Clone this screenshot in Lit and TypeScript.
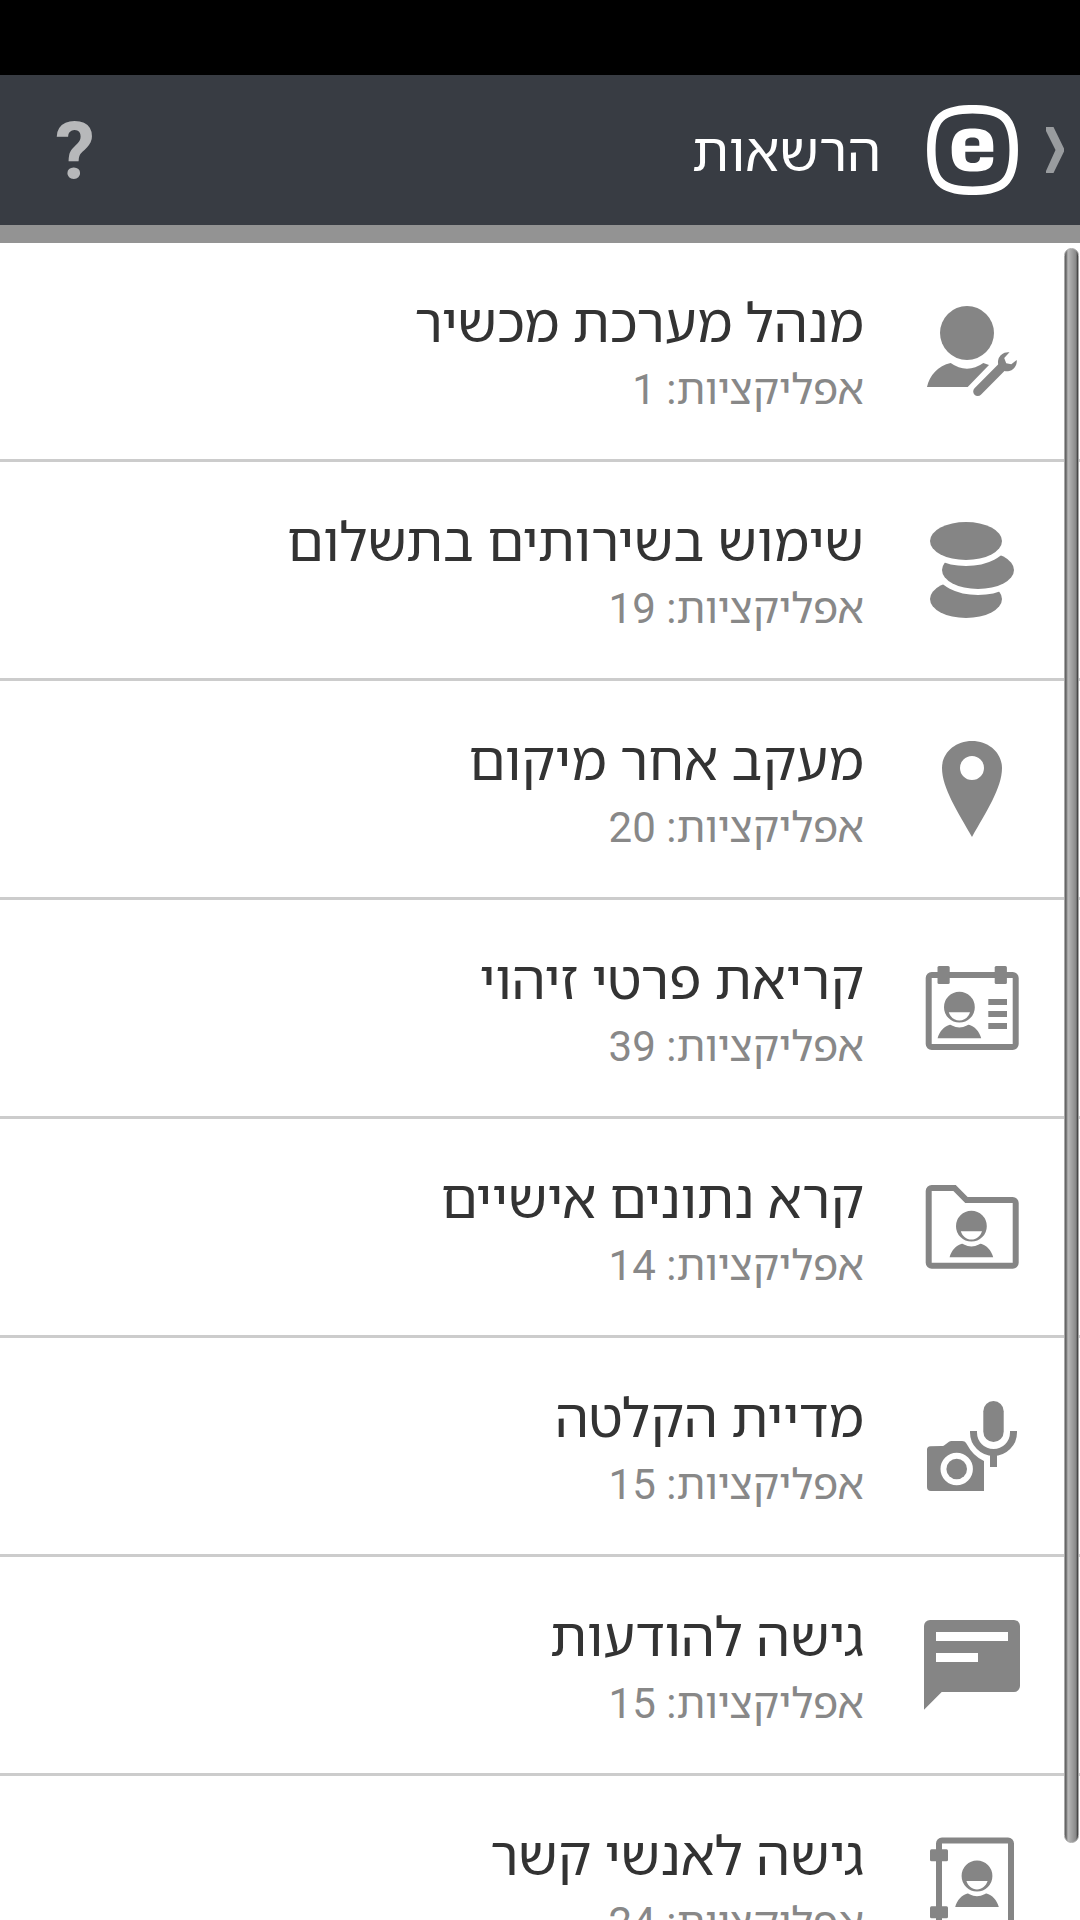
import { LitElement, html, css, svg, type SVGTemplateResult } from "lit";
import { customElement, property } from "lit/decorators.js";

interface Permission {
  title: string;
  count: number;
  icon: SVGTemplateResult;
}

/** Head-and-shoulders figure, drawn around the centre of the head. */
const person = (x: number, y: number) => svg`
  <g transform="translate(${x} ${y})">
    <path fill-rule="evenodd" d="M0-15.4a15.4 15.4 0 1 1 0 30.8a15.4 15.4 0 1 1 0-30.8zM-10.6 5c1.6 5 5.6 8.4 10.6 8.4s9-3.4 10.6-8.4z"/>
    <path d="M-21.8 31C-20 24.500-15 18.700-9.500 17.600Q-8.500 17.500-7.500 18.200Q0 22.400 7.500 18.200Q8.500 17.500 9.500 17.600C15 18.700 20 24.500 21.800 31z"/>
  </g>`;

const adminIcon = svg`
  <circle cx="43" cy="30" r="27"/>
  <path d="M3 84C5.500 72.500 14 62.500 26.700 60Q34.500 65.700 43 65.700T59.300 60L65 62L43.700 84z"/>
  <path d="M53.700 88.500L78.500 63.500" fill="none" stroke="#858585" stroke-width="9" stroke-linecap="round"/>
  <path d="M85.500 49.300A10 10 0 0 0 74.400 62L80.500 68A10 10 0 0 0 92.700 57L87.300 61.200L82.200 60.200L80.200 55z"/>`;

const coinsIcon = svg`
  <ellipse cx="42" cy="77" rx="36" ry="19"/>
  <ellipse class="lifted" cx="54" cy="48" rx="36" ry="19"/>
  <ellipse class="lifted" cx="42" cy="19" rx="36" ry="19"/>`;

const pinIcon = svg`
  <path fill-rule="evenodd" d="M48 0C65 0 78 12 78 27C78 47 62 71 48 96C34 71 18 47 18 27C18 12 31 0 48 0zM48 15a12 12 0 1 0 0 24a12 12 0 1 0 0-24z"/>`;

const badgeIcon = svg`
  <rect class="line" x="4.700" y="15" width="87" height="72" rx="3"/>
  <rect x="13.500" y="6" width="12.200" height="18" rx="1.500"/>
  <rect x="70.700" y="6" width="12.200" height="18" rx="1.500"/>
  <path d="M64.300 39H83v6H64.300zM64.300 51H83v6H64.300zM64.300 63H83v6H64.300z"/>
  ${person(35.4, 47.2)}`;

const folderIcon = svg`
  <path class="line" d="M7.700 9H30.500L42.500 21H88.700a3 3 0 0 1 3 3V83.700a3 3 0 0 1-3 3H7.700a3 3 0 0 1-3-3V12a3 3 0 0 1 3-3z"/>
  ${person(47.4, 47.2)}`;

const mediaIcon = svg`
  <rect x="59.300" y="3" width="20.400" height="41" rx="10.200"/>
  <path d="M49.500 33v1.500a20 20 0 0 0 40 0V33" fill="none" stroke="#858585" stroke-width="7"/>
  <path d="M66 56h7v13h-7z"/>
  <path fill-rule="evenodd" d="M6.500 48.300L18 48Q19.200 48 20 47.400L25 43.700Q26 43 27.500 43H38Q39.500 43 40.500 43.600Q42 44.500 43 46.500Q49 58 60 63V93H7Q3 93 3 89V51.500Q3 48.500 6.500 48.300zM32.700 54.800a16.200 16.200 0 1 0 0 32.400a16.200 16.200 0 1 0 0-32.400z"/>
  <circle cx="32.700" cy="71" r="10.300"/>`;

const messageIcon = svg`
  <path fill-rule="evenodd" d="M6 3H90a6 6 0 0 1 6 6V69a6 6 0 0 1-6 6H17.700L0 92.700V9a6 6 0 0 1 6-6zM12 15v9H84v-9zM12 36v9H54v-9z"/>`;

const contactsIcon = svg`
  <rect class="line" x="15" y="4.400" width="72" height="87" rx="3"/>
  <rect x="6" y="13.300" width="18" height="12" rx="1.500"/>
  <rect x="6" y="70.300" width="18" height="12" rx="1.500"/>
  ${person(53, 40)}`;

const permissions: Permission[] = [
  { title: "מנהל מערכת מכשיר", count: 1, icon: adminIcon },
  { title: "שימוש בשירותים בתשלום", count: 19, icon: coinsIcon },
  { title: "מעקב אחר מיקום", count: 20, icon: pinIcon },
  { title: "קריאת פרטי זיהוי", count: 39, icon: badgeIcon },
  { title: "קרא נתונים אישיים", count: 14, icon: folderIcon },
  { title: "מדיית הקלטה", count: 15, icon: mediaIcon },
  { title: "גישה להודעות", count: 15, icon: messageIcon },
  { title: "גישה לאנשי קשר", count: 24, icon: contactsIcon },
];

@customElement("permission-row")
export class PermissionRow extends LitElement {
  @property({ attribute: false }) item!: Permission;

  static styles = css`
    :host {
      display: block;
    }
    .row {
      display: flex;
      align-items: center;
      gap: 60px;
      height: 216px;
      padding: 0 60px;
      border-bottom: 3px solid #cccccc;
      color: inherit;
      text-decoration: none;
    }
    .icon {
      flex: none;
      width: 96px;
      height: 96px;
      fill: #858585;
    }
    .line {
      fill: none;
      stroke: #858585;
      stroke-width: 6;
    }
    .lifted {
      stroke: #ffffff;
      stroke-width: 12;
      paint-order: stroke;
    }
    .text {
      display: flex;
      flex-direction: column;
      gap: 2px;
      min-width: 0;
      padding-top: 4px;
    }
    .title {
      color: #333333;
      font-size: 54px;
      line-height: 72px;
    }
    .count {
      color: #888888;
      font-size: 42px;
      line-height: 56px;
    }
  `;

  render() {
    return html`
      <a class="row" href="#">
        <svg class="icon" viewBox="0 0 96 96" aria-hidden="true">${this.item.icon}</svg>
        <span class="text">
          <span class="title">${this.item.title}</span>
          <span class="count">אפליקציות: ${this.item.count}</span>
        </span>
      </a>
    `;
  }
}

@customElement("app-root")
export class AppRoot extends LitElement {
  static styles = css`
    :host {
      display: flex;
      flex-direction: column;
      height: 100vh;
      overflow: hidden;
      background: #ffffff;
      font-family: Roboto, "Noto Sans Hebrew", "Open Sans", sans-serif;
    }
    .status {
      flex: none;
      height: 75px;
      background: #000000;
    }
    .bar {
      flex: none;
      display: flex;
      align-items: center;
      justify-content: space-between;
      height: 150px;
      padding: 0 16px 0 45px;
      background: #383c43;
      border-bottom: 18px solid #939393;
    }
    .up {
      display: flex;
      align-items: center;
      gap: 28px;
      padding: 0;
      border: 0;
      background: none;
    }
    .chevron {
      width: 18px;
      height: 46px;
      fill: #999c9f;
    }
    .logo {
      width: 91px;
      height: 90px;
      fill: #ffffff;
    }
    .heading {
      display: flex;
      align-items: center;
      gap: 46px;
    }
    .name {
      margin: 0;
      padding-top: 6px;
      color: #ffffff;
      font-size: 54px;
      line-height: 72px;
      font-weight: 400;
    }
    .help {
      width: 60px;
      padding: 4px 0 0;
      border: 0;
      background: none;
      color: #b7b8ba;
      font: 700 80px/96px Roboto, sans-serif;
    }
    .content {
      flex: 1;
      min-height: 0;
      position: relative;
      overflow: hidden;
    }
    .list {
      margin: 0;
      padding: 0;
      list-style: none;
    }
    .thumb {
      position: absolute;
      top: 5px;
      right: 1px;
      bottom: 77px;
      width: 15px;
      box-sizing: border-box;
      border: 1px solid #a8a8a8;
      border-radius: 8px;
      background: linear-gradient(to right, #666666 0 1px, #b8b8b8 3px, #888888 11px, #333333 13px);
    }
  `;

  render() {
    return html`
      <div class="status"></div>
      <header class="bar" dir="rtl">
        <div class="heading">
          <button class="up" aria-label="חזרה">
            <svg class="chevron" viewBox="0 0 18 46" aria-hidden="true">
              <path d="M0 0H7.500L18 21.500Q18.500 23 18 24.500L7.500 46H0V44L9.500 23L0 4z" />
            </svg>
            <svg class="logo" viewBox="0 0 91 90" aria-hidden="true">
              <path
                d="M45.500 4.200C75.500 4.200 86.700 13 86.700 45S75.500 85.800 45.500 85.800S4.300 77 4.300 45S15.500 4.200 45.500 4.200z"
                fill="none"
                stroke="#ffffff"
                stroke-width="8.500"
              />
              <path
                fill-rule="evenodd"
                d="M66.300 46.800V41C66.300 28 60 23.500 45.500 23.500S24.700 29 24.700 45S31 66.500 45.500 66.500S66.300 64 66.300 52.200H53C53 56 51 58 45.700 58S38.300 56 38.300 50V46.800zM38.300 40.700V38C38.300 34 41 32.500 45.500 32.500S52.300 34 52.300 38V40.700z"
              />
            </svg>
          </button>
          <h1 class="name">הרשאות</h1>
        </div>
        <button class="help" aria-label="עזרה">?</button>
      </header>
      <main class="content" dir="rtl">
        <ul class="list">
          ${permissions.map((item) => html`<li><permission-row .item=${item}></permission-row></li>`)}
        </ul>
        <div class="thumb"></div>
      </main>
    `;
  }
}
